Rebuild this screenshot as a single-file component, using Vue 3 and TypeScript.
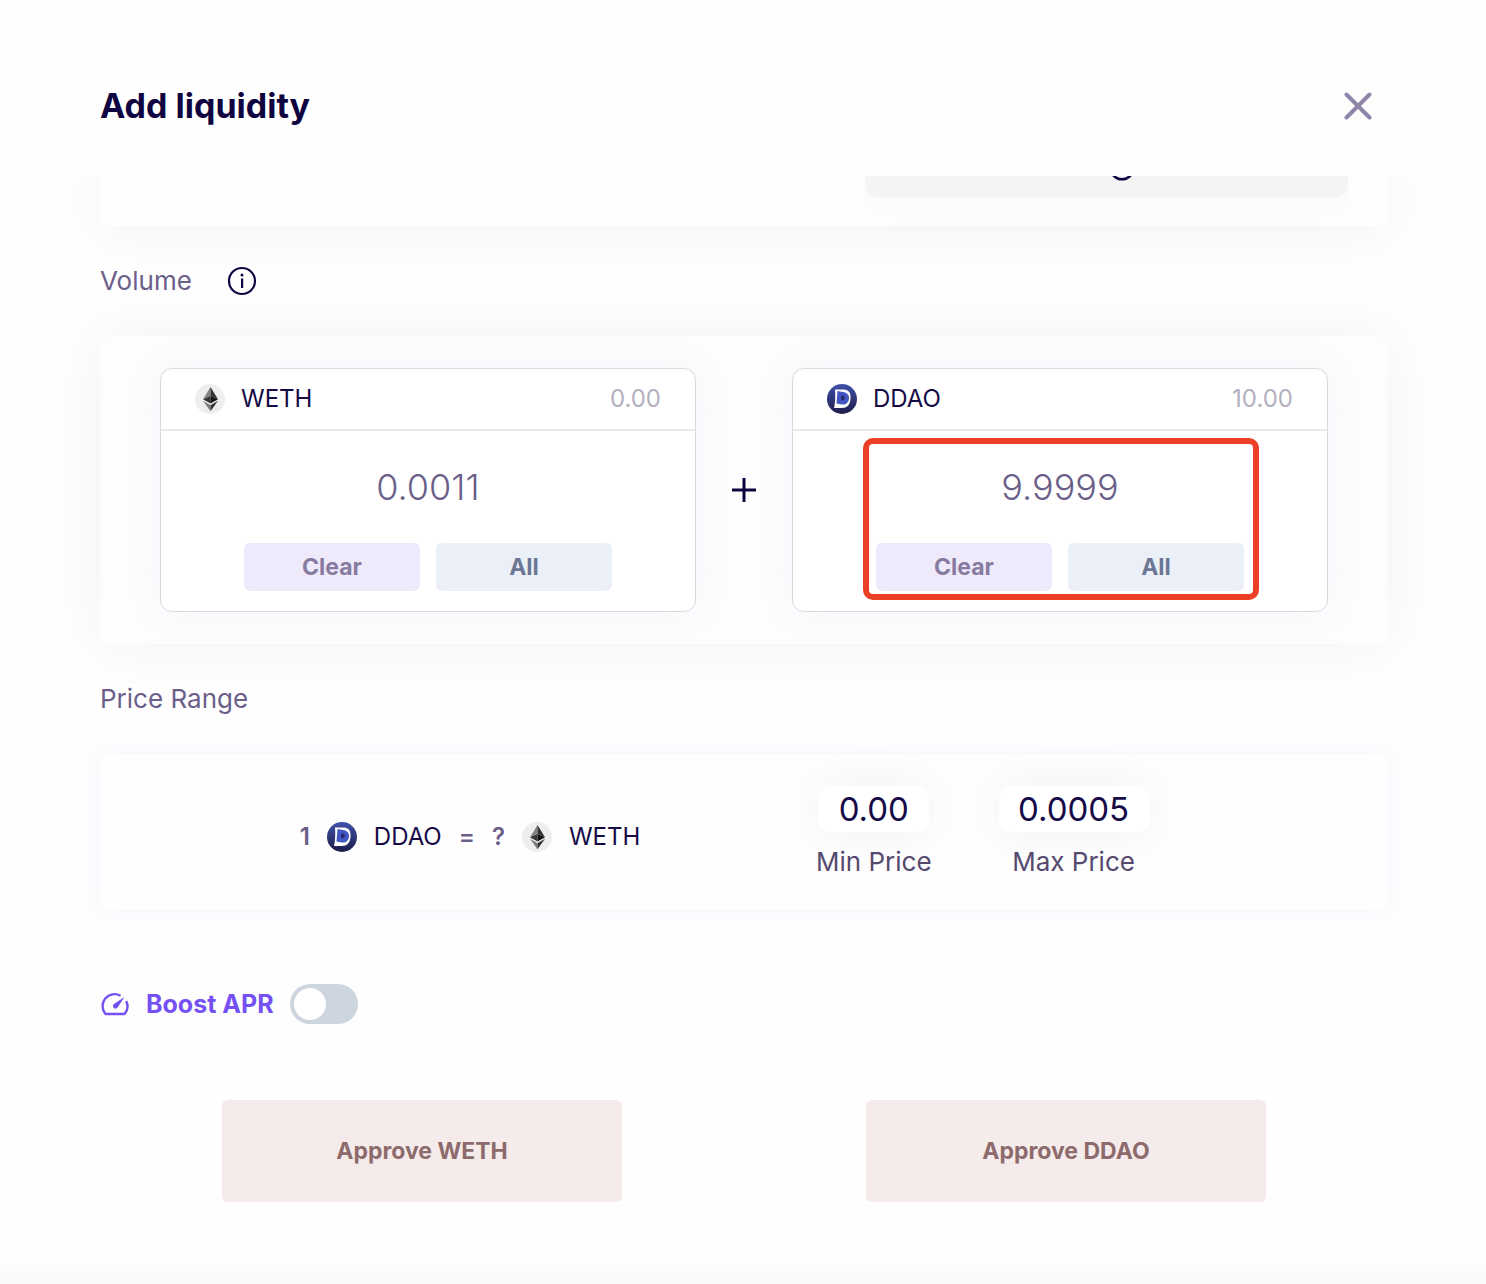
<script setup lang="ts">
import { reactive, ref } from 'vue'

interface TokenField {
  symbol: string
  balance: string
  amount: string
  highlighted: boolean
}

const tokens = reactive<TokenField[]>([
  { symbol: 'WETH', balance: '0.00', amount: '0.0011', highlighted: false },
  { symbol: 'DDAO', balance: '10.00', amount: '9.9999', highlighted: true },
])

const minPrice = ref('0.00')
const maxPrice = ref('0.0005')
const boost = ref(false)

function setAll(token: TokenField) {
  token.amount = token.balance
}
</script>

<template>
  <svg class="defs" width="0" height="0" aria-hidden="true">
    <defs>
      <linearGradient id="ddao-bg" x1="0" y1="0" x2="0" y2="1">
        <stop offset="0" stop-color="#3f51a8" />
        <stop offset="1" stop-color="#1e1b4b" />
      </linearGradient>
      <symbol id="token-WETH" viewBox="0 0 30 30">
        <circle cx="15" cy="15" r="15" fill="#eceef0" />
        <path d="M15.500 3 L8 15.300 L15.500 12z" fill="#828384" />
        <path d="M15.500 3 L23 15.300 L15.500 12z" fill="#343434" />
        <path d="M8 15.300 L15.500 12 V19.600z" fill="#343434" />
        <path d="M23 15.300 L15.500 12 V19.600z" fill="#101211" />
        <path d="M8 16.800 L15.500 21.200 V27.300z" fill="#7c7d7d" />
        <path d="M23 16.800 L15.500 21.200 V27.300z" fill="#343434" />
      </symbol>
      <symbol id="token-DDAO" viewBox="0 0 30 30">
        <circle cx="15" cy="15" r="15" fill="url(#ddao-bg)" />
        <path d="M8 5.500h8.500c5.500 0 7.500 3.500 7 9.500-.5 6-3.500 9-8.500 9H7c1.300-5 1.500-13 1-18.500z" fill="#fff" />
        <path d="M10.500 7l5.500 1c4 .7 6.500 3 6 6.500-.5 4.500-3.500 6.500-7 6l-5.500-1z" fill="#4257c4" />
        <path d="M14.500 11.500h1.500c1.300 0 2 1 1.700 2.600-.3 1.600-1.200 2.200-2.400 2.200H14z" fill="#252a66" />
      </symbol>
      <symbol id="info" viewBox="0 0 30 30">
        <circle cx="15" cy="15" r="13" fill="none" stroke="#0f0440" stroke-width="2.200" />
        <rect x="14" y="12.500" width="2.200" height="9.500" fill="#0f0440" />
        <circle cx="15" cy="9" r="1.500" fill="#0f0440" />
      </symbol>
    </defs>
  </svg>

  <main class="dialog" role="dialog" aria-labelledby="title">
    <header class="top">
      <h1 id="title">Add liquidity</h1>
      <button class="close" type="button" aria-label="Close">
        <svg width="28" height="28" viewBox="0 0 28 28" aria-hidden="true">
          <path d="M2.500 2.500l23 23M25.500 2.500l-23 23" stroke="#8f86a9" stroke-width="4" stroke-linecap="round" />
        </svg>
      </button>
    </header>

    <div class="body">
      <section class="panel pool">
        <div class="pool-note">
          <svg width="26" height="26" viewBox="0 0 30 30" aria-hidden="true">
            <circle cx="15" cy="15" r="13" fill="none" stroke="#0f0440" stroke-width="3" />
          </svg>
        </div>
      </section>

      <h2 class="label">
        Volume
        <svg width="30" height="30" aria-hidden="true"><use href="#info" /></svg>
      </h2>

      <section class="panel volume">
        <template v-for="(token, i) in tokens" :key="token.symbol">
          <svg v-if="i > 0" width="26" height="26" viewBox="0 0 26 26" aria-hidden="true">
            <path d="M13 1v24M1 13h24" stroke="#0f0440" stroke-width="3" />
          </svg>
          <article class="token">
            <div class="token-head">
              <svg width="30" height="30" aria-hidden="true"><use :href="'#token-' + token.symbol" /></svg>
              <label :for="'amount-' + token.symbol">{{ token.symbol }}</label>
              <span class="balance">{{ token.balance }}</span>
            </div>
            <div class="token-body">
              <input :id="'amount-' + token.symbol" v-model="token.amount" class="amount" type="text" />
              <div class="actions">
                <button class="clear" type="button" @click="token.amount = ''">Clear</button>
                <button class="all" type="button" @click="setAll(token)">All</button>
              </div>
              <div v-if="token.highlighted" class="highlight"></div>
            </div>
          </article>
        </template>
      </section>

      <h2 class="label">Price Range</h2>

      <section class="panel range">
        <div class="rate">
          <b>1</b>
          <svg width="30" height="30" aria-hidden="true"><use href="#token-DDAO" /></svg>
          <span>DDAO</span>
          <b>=</b>
          <b>?</b>
          <svg width="30" height="30" aria-hidden="true"><use href="#token-WETH" /></svg>
          <span>WETH</span>
        </div>
        <div class="prices">
          <div class="price">
            <input id="min-price" v-model="minPrice" class="min" type="text" />
            <label for="min-price">Min Price</label>
          </div>
          <div class="price">
            <input id="max-price" v-model="maxPrice" class="max" type="text" />
            <label for="max-price">Max Price</label>
          </div>
        </div>
      </section>

      <div class="boost">
        <svg width="30" height="30" viewBox="0 0 30 30" fill="none" aria-hidden="true">
          <path d="M20.500 6.700A12 12 0 0 0 5.500 25h19a12 12 0 0 0 1.700-13" stroke="#7550f2" stroke-width="2.400" stroke-linejoin="round" />
          <path d="M24.500 8L17.800 18.300a2.600 2.600 0 1 1-3.900-3.300z" fill="#7550f2" />
        </svg>
        <label for="boost">Boost APR</label>
        <input id="boost" v-model="boost" type="checkbox" role="switch" />
      </div>

      <div class="approvals">
        <button v-for="token in tokens" :key="token.symbol" type="button">Approve {{ token.symbol }}</button>
      </div>
    </div>
    <div class="fade"></div>
  </main>
</template>

<style>
body {
  background: #fefefe;
}
</style>

<style scoped>
* {
  box-sizing: border-box;
}

.defs {
  position: absolute;
}

.dialog {
  display: flex;
  flex-direction: column;
  min-height: 100vh;
  color: #160a47;
  font-family: Inter, "Open Sans", sans-serif;
  font-size: 24px;
  line-height: 32px;
}

button,
input {
  font: inherit;
  border: 0;
  padding: 0;
  margin: 0;
}

button {
  cursor: pointer;
}

svg {
  display: block;
  flex: none;
}

.top {
  display: flex;
  align-items: center;
  justify-content: space-between;
  height: 176px;
  padding: 36px 114px 0 100px;
}

h1 {
  margin: 0;
  color: #0f0440;
  font-size: 34px;
  line-height: 40px;
  font-weight: 700;
}

.close {
  margin-bottom: 0;
  background: none;
}

.body {
  flex: 1;
  overflow: hidden;
  padding: 0 98px 60px 100px;
}

.panel {
  border-radius: 12px;
}

.pool {
  display: flex;
  justify-content: flex-end;
  height: 50px;
  padding: 0 40px 29px;
  border-radius: 0 0 12px 12px;
  background: #fefefe;
  box-shadow: 0 0 60px rgba(40, 30, 110, 0.06);
}

.pool-note {
  display: flex;
  align-items: flex-end;
  justify-content: center;
  width: 40%;
  padding: 0 0 16px 32px;
  border-radius: 0 0 12px 12px;
  background: #f4f4f4;
  box-shadow: 0 0 50px rgba(40, 30, 110, 0.05);
}

.label {
  display: flex;
  align-items: center;
  gap: 35px;
  height: 110px;
  margin: 0;
  color: #6b5f8a;
  font-size: 26px;
  line-height: 32px;
  font-weight: 400;
}

.volume {
  display: flex;
  align-items: center;
  justify-content: space-between;
  gap: 35px;
  padding: 32px 60px;
  background: #fdfdfd;
  box-shadow: 0 0 60px rgba(40, 30, 110, 0.05);
}

.token {
  flex: 1;
  min-width: 0;
  border: 1px solid #dcd8e2;
  border-radius: 12px;
  background: #fff;
  box-shadow: 0 0 40px rgba(117, 60, 220, 0.05);
}

.token-head {
  display: flex;
  align-items: center;
  gap: 16px;
  height: 62px;
  padding: 0 34px;
  border-bottom: 2px solid #e8e8e8;
}

.balance {
  margin-left: auto;
  color: #b5b0c0;
}

.token-body {
  position: relative;
  display: flex;
  flex-direction: column;
  align-items: center;
  gap: 28px;
  padding: 28px 0 20px;
}

.amount {
  width: 368px;
  height: 56px;
  background: transparent;
  color: #6b5f8a;
  font-size: 36px;
  line-height: 48px;
  font-weight: 300;
  text-align: center;
}

.actions {
  display: flex;
  gap: 16px;
}

.actions button {
  width: 176px;
  height: 48px;
  border-radius: 6px;
  font-size: 23px;
  font-weight: 700;
}

.clear {
  background: #eeeafb;
  color: #877aa0;
}

.all {
  background: #ebf0f8;
  color: #6b7794;
}

.highlight {
  position: absolute;
  top: 7px;
  bottom: 11px;
  left: 50%;
  width: 396px;
  margin-left: -197px;
  border: 6px solid #eb4026;
  border-radius: 10px;
  pointer-events: none;
}

.range {
  display: grid;
  grid-template-columns: 1fr 1fr;
  align-items: center;
  height: 156px;
  background: #fefefe;
  box-shadow: 0 0 24px rgba(117, 70, 255, 0.06);
}

.rate {
  display: flex;
  align-items: center;
  justify-content: center;
  gap: 17px;
  padding: 10px 0 0 96px;
}

.rate b {
  color: #6b5f8a;
  font-weight: 600;
}

.prices {
  display: flex;
  gap: 67px;
  padding-left: 72px;
}

.price {
  display: flex;
  flex-direction: column;
  align-items: center;
  gap: 14px;
}

.price input {
  height: 46px;
  border-radius: 12px;
  background: #fff;
  box-shadow: 0 0 50px rgba(40, 30, 110, 0.06);
  color: #160a47;
  font-size: 33px;
  line-height: 40px;
  text-align: center;
}

.price .min {
  width: 110px;
}

.price .max {
  width: 150px;
}

.price label {
  color: #55496f;
  font-size: 26px;
}

.boost {
  display: flex;
  align-items: center;
  gap: 16px;
  margin-top: 74px;
  color: #7550f2;
  font-size: 25px;
  font-weight: 700;
}

.boost input {
  appearance: none;
  width: 68px;
  height: 40px;
  padding: 4px;
  border-radius: 20px;
  background: #cdd5de;
}

.boost input::after {
  content: "";
  display: block;
  width: 32px;
  height: 32px;
  border-radius: 50%;
  background: #fff;
}

.boost input:checked {
  background: #7550f2;
}

.boost input:checked::after {
  margin-left: auto;
}

.approvals {
  display: grid;
  grid-template-columns: 1fr 1fr;
  justify-items: center;
  margin-top: 76px;
}

.approvals button {
  width: 400px;
  height: 102px;
  border-radius: 6px;
  background: #f5ebea;
  color: #8d6a6c;
  font-size: 23px;
  font-weight: 700;
}

.fade {
  height: 22px;
  background: linear-gradient(#fefefe, #f9f9f9);
}
</style>
